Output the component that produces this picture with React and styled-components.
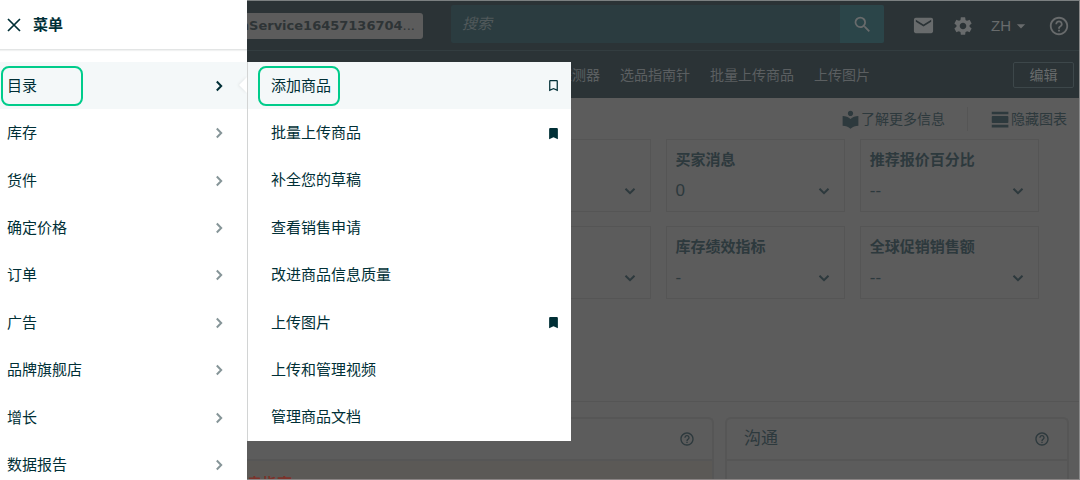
import React from 'react';
import styled, { createGlobalStyle } from 'styled-components';
import {
  MdArrowDropDown,
  MdBookmark,
  MdBookmarkBorder,
  MdEmail,
  MdHelpOutline,
  MdLocalLibrary,
  MdSearch,
  MdSettings,
  MdViewDay,
} from 'react-icons/md';

const GlobalStyle = createGlobalStyle`
  * { box-sizing: border-box; }

  body {
    margin: 0;
    background: #5c5c5c;
    font-family: "Liberation Sans", "Noto Sans CJK SC", sans-serif;
    font-size: 15px;
    line-height: 20px;
    color: #2d393d;
  }

  button, input {
    margin: 0;
    padding: 0;
    border: none;
    background: none;
    font: inherit;
    color: inherit;
  }

  ul {
    margin: 0;
    padding: 0;
    list-style: none;
  }

  a {
    color: inherit;
    text-decoration: none;
  }
`;

const Page = styled.div`
  position: relative;
  display: flex;
  height: 100vh;
  overflow: hidden;
`;

/* side menu */

const Sidebar = styled.aside`
  flex: none;
  width: 247px;
  background: #fff;
  color: #002f36;
`;

const SidebarHeader = styled.div`
  display: flex;
  align-items: center;
  gap: 12px;
  height: 50px;
  padding: 0 7px;
  border-bottom: 1px solid #e3e5e5;
  box-shadow: 0 1px 1px #f1f2f2;
`;

const CloseButton = styled.button`
  display: flex;
`;

const SidebarTitle = styled.h1`
  margin: 0;
  font-size: 15px;
  font-weight: 700;
`;

const MenuList = styled.ul`
  display: grid;
  grid-auto-rows: 1fr;
  height: ${({ $height }) => $height}px;
`;

const SidebarList = styled(MenuList)`
  margin-top: 12px;
`;

const MenuLink = styled.a`
  display: flex;
  align-items: center;
  justify-content: space-between;
  height: 100%;
  padding: ${({ $sub }) => ($sub ? '0 10px 0 23px' : '0 22px 0 7px')};
  background: ${({ $active }) => ($active ? '#f4f8f9' : 'transparent')};
`;

const Marked = styled.span`
  display: flex;
  align-items: center;
  width: 82px;
  height: 40px;
  margin-left: ${({ $inset }) => -$inset - 2}px;
  padding-left: ${({ $inset }) => $inset}px;
  border: 2px solid #00cc8b;
  border-radius: 8px;
`;

const Caret = styled.span`
  position: absolute;
  left: 239px;
  top: 77px;
  border: 8px solid transparent;
  border-left: none;
  border-right-color: #fff;
  filter: drop-shadow(-1px 0 1px #e2e6e7);
`;

const Submenu = styled.nav`
  position: absolute;
  left: 247px;
  top: 62px;
  width: 324px;
  border-left: 1px solid #d2d4d4;
  background: #fff;
  color: #002f36;
`;

/* page behind the menu */

const Main = styled.div`
  display: flex;
  flex: 1;
  flex-direction: column;
  min-width: 0;
  border-top: 1px solid #7b8081;
  border-right: 1px solid #8a8a8a;
`;

const TopBar = styled.header`
  display: flex;
  align-items: center;
  height: 50px;
  padding-right: 9px;
  border-bottom: 1px solid #333d40;
  background: #2b3336;
  color: #686b6c;
`;

const Account = styled.button`
  display: flex;
  justify-content: flex-end;
  width: 176px;
  height: 26px;
  margin-right: 28px;
  padding-right: 8px;
  overflow: hidden;
  border-radius: 0 3px 3px 0;
  background: #5c5c5c;
  color: #2e3436;
  font: bold 13px/26px "DejaVu Sans", "Noto Sans CJK SC", sans-serif;
`;

const Ellipsis = styled.span`
  font-weight: 400;
`;

const Search = styled.form`
  display: flex;
  flex: 1;
  height: 38px;
  margin-bottom: 3px;
  min-width: 0;
  border-radius: 2px;
  background: #2b3c40;
`;

const SearchInput = styled.input`
  flex: 1;
  min-width: 0;
  padding: 0 11px;
  outline: none;

  &::placeholder {
    color: #51595b;
    font-style: italic;
    opacity: 1;
  }
`;

const SearchButton = styled.button`
  display: flex;
  align-items: center;
  justify-content: center;
  width: 44px;
  border-radius: 0 2px 2px 0;
  background: #2b4549;
`;

const Tools = styled.div`
  display: flex;
  align-items: center;
  gap: 17px;
  margin-left: 28px;
`;

const ToolButton = styled.button`
  display: flex;
  align-items: center;
`;

const Shortcuts = styled.nav`
  display: flex;
  align-items: center;
  gap: 20px;
  height: 47px;
  padding: 0 5px 0 283px;
  background: #2b3336;
  color: #5b5f61;
  font-size: 14px;
  white-space: nowrap;
`;

const EditButton = styled.button`
  width: 61px;
  height: 26px;
  margin-left: auto;
  border: 1px solid #3d474a;
  border-radius: 2px;
  color: #686b6c;
`;

const ChartActions = styled.div`
  display: flex;
  justify-content: flex-end;
  height: 41px;
  padding: 9px 12px 8px;
  font-size: 14px;
`;

const ChartAction = styled.button`
  display: flex;
  align-items: center;

  & + & {
    margin-left: 22px;
    padding-left: 22px;
    border-left: 1px solid #555;
  }
`;

const Metrics = styled.section`
  display: grid;
  grid-template-columns: repeat(4, 1fr);
  gap: 14px 15px;
  padding: 0 40px 102px 30px;
  border-bottom: 1px solid #555;
`;

const Metric = styled.article`
  display: flex;
  flex-direction: column;
  justify-content: space-between;
  height: 73px;
  padding: 10px 14px 10px 9px;
  border: 1px solid #555;
`;

const MetricTitle = styled.h2`
  margin: 0;
  font-size: 15px;
`;

const MetricValue = styled.div`
  display: flex;
  align-items: center;
  justify-content: space-between;
  min-height: 20px;
  font-size: 17px;
`;

const MetricToggle = styled.button`
  display: flex;
  margin-left: auto;
`;

const Panels = styled.section`
  display: grid;
  grid-template-columns: 1fr 344px;
  flex: 1;
  gap: 11px;
  min-height: 0;
  padding: 15px 10px 0 0;
  border-bottom: 1px solid #8a8484;
`;

const Panel = styled.article`
  overflow: hidden;
  border: 2px solid #565656;
  border-width: 2px 2px 0 ${({ $open }) => ($open ? 0 : 2)}px;
  border-radius: ${({ $open }) => ($open ? '0 6px 0 0' : '6px 6px 0 0')};
`;

const PanelHeader = styled.div`
  display: flex;
  align-items: center;
  justify-content: space-between;
  height: 42px;
  padding: 0 17px;
  border-bottom: 2px solid #565656;
`;

const PanelTitle = styled.h2`
  margin: 0;
  font-size: 17px;
  font-weight: 400;
`;

const Notice = styled.div`
  height: 80px;
  padding-top: 13px;
  background: #5b5956;
  color: #7c322a;
  font-weight: 700;
`;

const Chevron = ({ down, color = 'currentColor' }) => (
  <svg width="12" height="12" viewBox="0 0 12 12" fill="none" stroke={color} strokeWidth="2">
    <path d={down ? 'M1.5 3.8 6 8.2 10.5 3.8' : 'M3.8 1.5 8.2 6 3.8 10.5'} />
  </svg>
);

const menu = ['目录', '库存', '货件', '确定价格', '订单', '广告', '品牌旗舰店', '增长', '数据报告'];

const submenu = [
  { label: '添加商品', icon: MdBookmarkBorder },
  { label: '批量上传商品', icon: MdBookmark },
  { label: '补全您的草稿' },
  { label: '查看销售申请' },
  { label: '改进商品信息质量' },
  { label: '上传图片', icon: MdBookmark },
  { label: '上传和管理视频' },
  { label: '管理商品文档' },
];

const shortcuts = ['商机探测器', '选品指南针', '批量上传商品', '上传图片'];

const metrics = [
  {},
  {},
  { title: '买家消息', value: '0' },
  { title: '推荐报价百分比', value: '--' },
  {},
  {},
  { title: '库存绩效指标', value: '-' },
  { title: '全球促销销售额', value: '--' },
];

const App = () => (
  <>
    <GlobalStyle />
    <Page>
      <Sidebar>
        <SidebarHeader>
          <CloseButton aria-label="关闭">
            <svg width="14" height="14" viewBox="0 0 14 14" stroke="#002f36" strokeWidth="1.7">
              <path d="M1 1 13 13M13 1 1 13" />
            </svg>
          </CloseButton>
          <SidebarTitle>菜单</SidebarTitle>
        </SidebarHeader>
        <SidebarList $height={427}>
          {menu.map((label, i) => (
            <li key={label}>
              <MenuLink href="#" $active={i === 0}>
                {i === 0 ? <Marked $inset={4}>{label}</Marked> : label}
                <Chevron color={i === 0 ? '#002f36' : '#869598'} />
              </MenuLink>
            </li>
          ))}
        </SidebarList>
      </Sidebar>

      <Main>
        <TopBar>
          <Account>
            nService16457136704<Ellipsis>...</Ellipsis>
          </Account>
          <Search>
            <SearchInput placeholder="搜索" aria-label="搜索" />
            <SearchButton type="button" aria-label="搜索">
              <MdSearch size={21} />
            </SearchButton>
          </Search>
          <Tools>
            <ToolButton aria-label="消息"><MdEmail size={23} /></ToolButton>
            <ToolButton aria-label="设置"><MdSettings size={22} /></ToolButton>
            <ToolButton>ZH<MdArrowDropDown size={20} /></ToolButton>
            <ToolButton aria-label="帮助"><MdHelpOutline size={22} /></ToolButton>
          </Tools>
        </TopBar>
        <Shortcuts>
          {shortcuts.map(label => <a href="#" key={label}>{label}</a>)}
          <EditButton>编辑</EditButton>
        </Shortcuts>
        <ChartActions>
          <ChartAction><MdLocalLibrary size={21} />了解更多信息</ChartAction>
          <ChartAction><MdViewDay size={21} />隐藏图表</ChartAction>
        </ChartActions>
        <Metrics>
          {metrics.map(({ title, value }, i) => (
            <Metric key={i}>
              <MetricTitle>{title}</MetricTitle>
              <MetricValue>
                {value}
                <MetricToggle aria-label="展开"><Chevron down /></MetricToggle>
              </MetricValue>
            </Metric>
          ))}
        </Metrics>
        <Panels>
          <Panel $open>
            <PanelHeader>
              <PanelTitle />
              <MdHelpOutline size={16} />
            </PanelHeader>
            <Notice>卖指南</Notice>
          </Panel>
          <Panel>
            <PanelHeader>
              <PanelTitle>沟通</PanelTitle>
              <MdHelpOutline size={16} />
            </PanelHeader>
          </Panel>
        </Panels>
      </Main>

      <Submenu>
        <MenuList $height={379}>
          {submenu.map(({ label, icon: Icon }, i) => (
            <li key={label}>
              <MenuLink href="#" $sub $active={i === 0}>
                {i === 0 ? <Marked $inset={11}>{label}</Marked> : label}
                {Icon && <Icon size={15} />}
              </MenuLink>
            </li>
          ))}
        </MenuList>
      </Submenu>
      <Caret />
    </Page>
  </>
);

export default App;
